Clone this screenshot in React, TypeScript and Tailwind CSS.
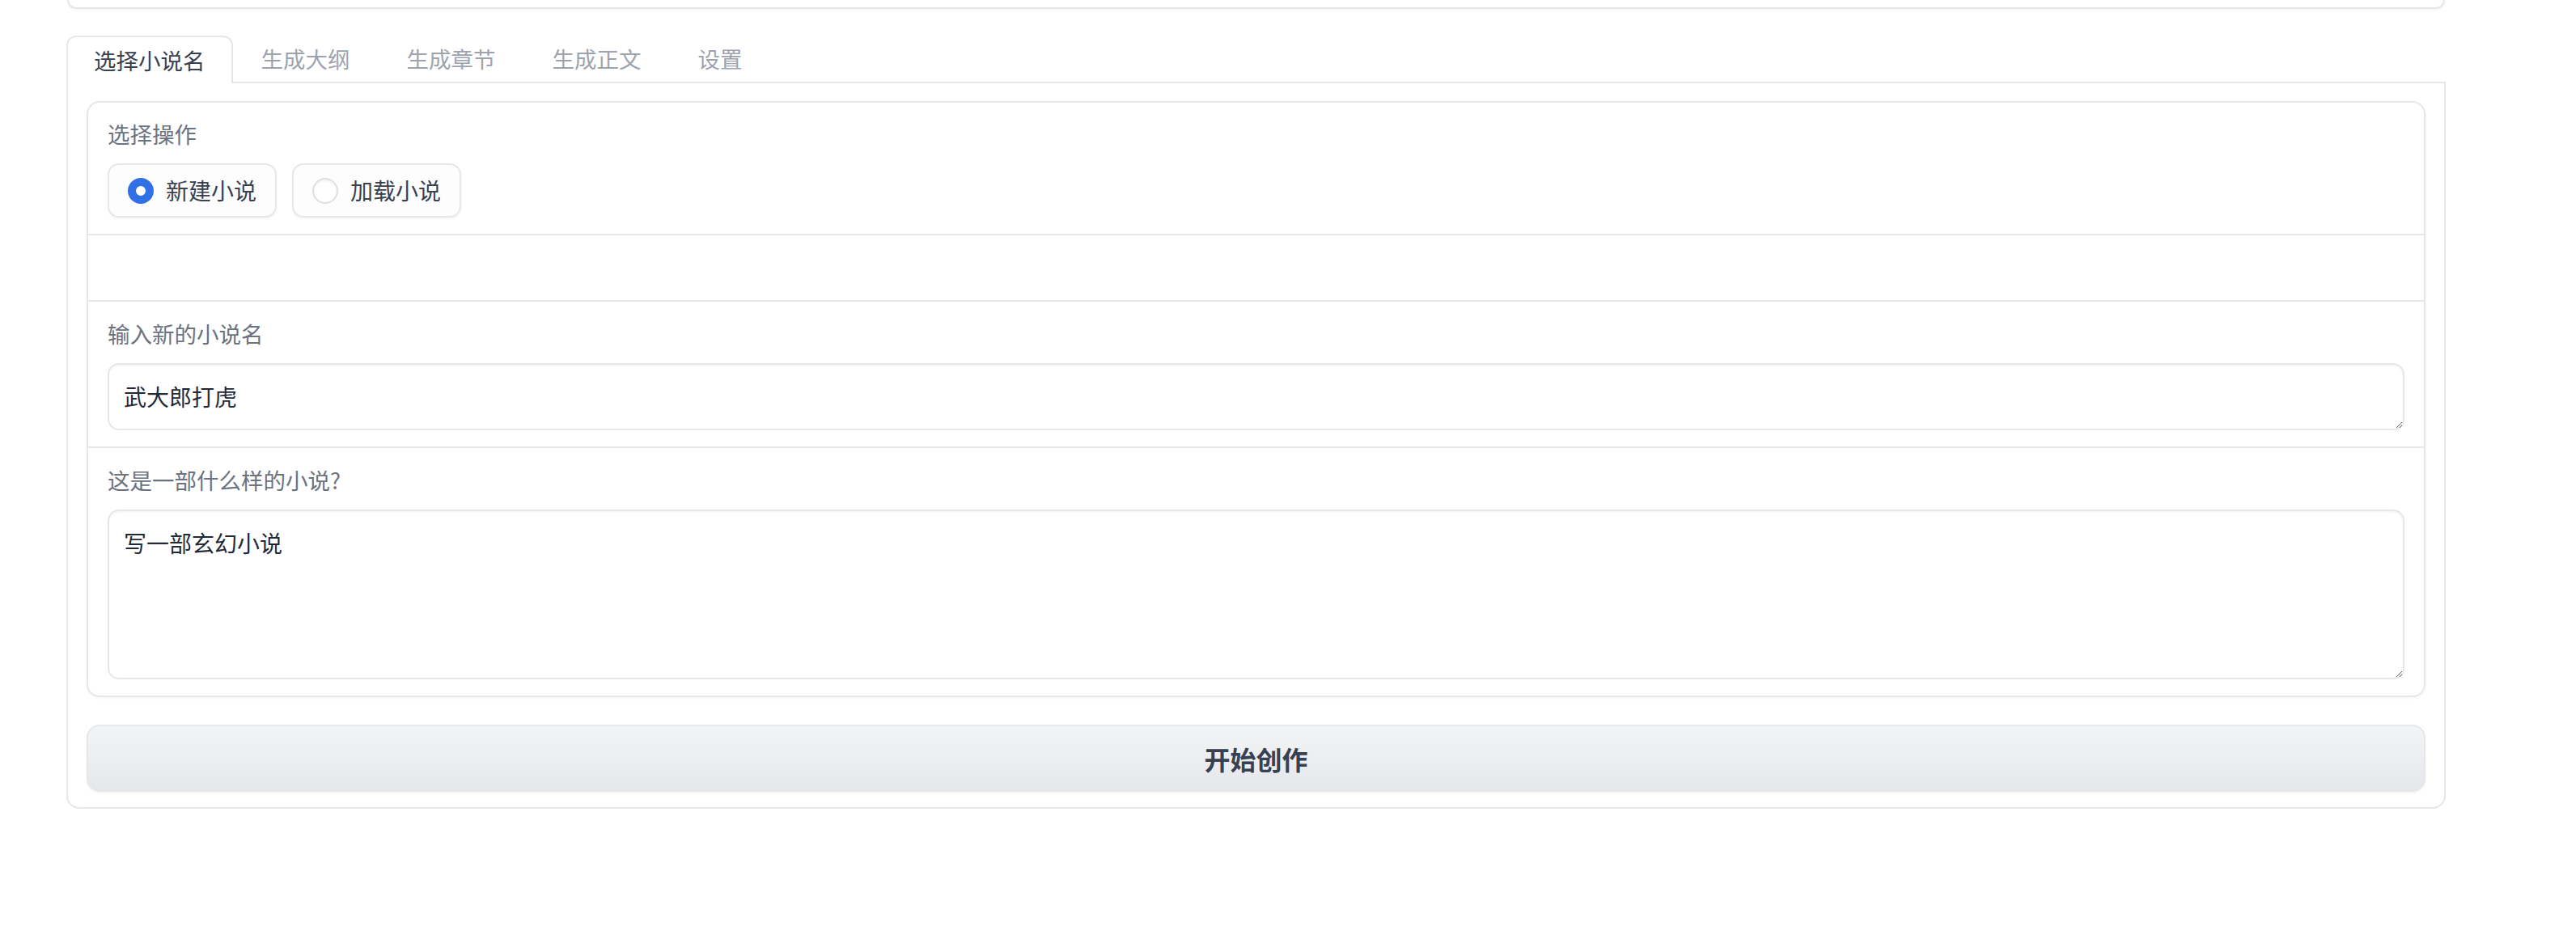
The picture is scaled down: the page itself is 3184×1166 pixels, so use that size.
import React, { useState } from 'react'

const tabs = ['选择小说名', '生成大纲', '生成章节', '生成正文', '设置']

function Radio({ label, checked, onClick }: any){
  return (
    <button onClick={onClick} className="flex items-center h-[67px] px-[23px] border-2 border-[#e5e7eb] rounded-[14px] bg-[#fdfdfd] shadow-[0_2px_3px_rgba(0,0,0,0.04)]">
      {checked
        ? <span className="w-[32px] h-[32px] rounded-full border-[10px] border-[#3270e6] bg-white" />
        : <span className="w-[32px] h-[32px] rounded-full border-2 border-[#dcdfe4] bg-white shadow-[inset_0_2px_2px_rgba(0,0,0,0.05)]" />}
      <span className="ml-[15px] text-[28px] leading-[39px] text-[#374151]">{label}</span>
    </button>
  )
}

export default function App(){
  const [active, setActive] = useState(0)
  const [mode, setMode] = useState('new')

  return (
    <div className="w-[3184px] min-h-[1166px] bg-white font-['Noto_Sans_CJK_SC',sans-serif]">
      <div className="ml-[82px] w-[2941px]">
        <div className="mx-[1px] h-[11px] border-x-2 border-b-2 border-[#e5e7eb] rounded-b-[16px] shadow-[0_2px_3px_rgba(0,0,0,0.03)]" />

        <div className="flex mt-[33px]">
          {tabs.map((t, i) => (
            <button key={t} onClick={()=>setActive(i)}
              className={i === active
                ? 'h-[59px] px-8 border-x-2 border-t-2 border-[#e5e7eb] rounded-t-[12px] bg-white text-[27.5px] text-[#374151]'
                : 'h-[59px] px-[35px] border-b-2 border-[#e5e7eb] text-[27.5px] text-[#9ca3af]'}>
              {t}
            </button>
          ))}
          <div className="flex-1 border-b-2 border-[#e5e7eb]" />
        </div>

        <div className="border-x-2 border-b-2 border-[#e5e7eb] rounded-b-[16px] px-[23px] pt-[22px] pb-[19px]">
          <div className="border-2 border-[#e5e7eb] rounded-[16px] bg-white divide-y-2 divide-[#e5e7eb] shadow-[0_2px_3px_rgba(0,0,0,0.03)]">
            <div className="px-[24px] pt-[19px] pb-[20px]">
              <div className="h-[39px] leading-[39px] text-[27.5px] text-[#6b7280] mb-[17px]">选择操作</div>
              <div className="flex gap-[19px]">
                <Radio label="新建小说" checked={mode === 'new'} onClick={()=>setMode('new')} />
                <Radio label="加载小说" checked={mode === 'load'} onClick={()=>setMode('load')} />
              </div>
            </div>
            <div className="h-[82px]" />
            <div className="px-[24px] pt-[20px] pb-[20px]">
              <div className="h-[39px] leading-[39px] text-[27.5px] text-[#6b7280] mb-[17px]">输入新的小说名</div>
              <textarea rows={1} defaultValue="武大郎打虎"
                className="block w-full h-[83px] px-[18px] py-[18px] border-2 border-[#e5e7eb] rounded-[14px] text-[28px] leading-[42px] text-[#1f2937] resize-y outline-none shadow-[inset_0_2px_2px_rgba(0,0,0,0.04)]" />
            </div>
            <div className="px-[24px] pt-[20px] pb-[20px]">
              <div className="h-[39px] leading-[39px] text-[27.5px] text-[#6b7280] mb-[17px]">这是一部什么样的小说?</div>
              <textarea rows={4} defaultValue="写一部玄幻小说"
                className="block w-full h-[210px] px-[18px] py-[18px] border-2 border-[#e5e7eb] rounded-[14px] text-[28px] leading-[42px] text-[#1f2937] resize-y outline-none shadow-[inset_0_2px_2px_rgba(0,0,0,0.04)]" />
            </div>
          </div>

          <button className="mt-[34px] w-full h-[83px] border-2 border-[#e5e7eb] rounded-[16px] bg-gradient-to-b from-[#f3f4f6] to-[#e5e7eb] text-[32px] font-semibold text-[#374151] shadow-[0_2px_3px_rgba(0,0,0,0.04)]">
            开始创作
          </button>
        </div>
      </div>
    </div>
  )
}
